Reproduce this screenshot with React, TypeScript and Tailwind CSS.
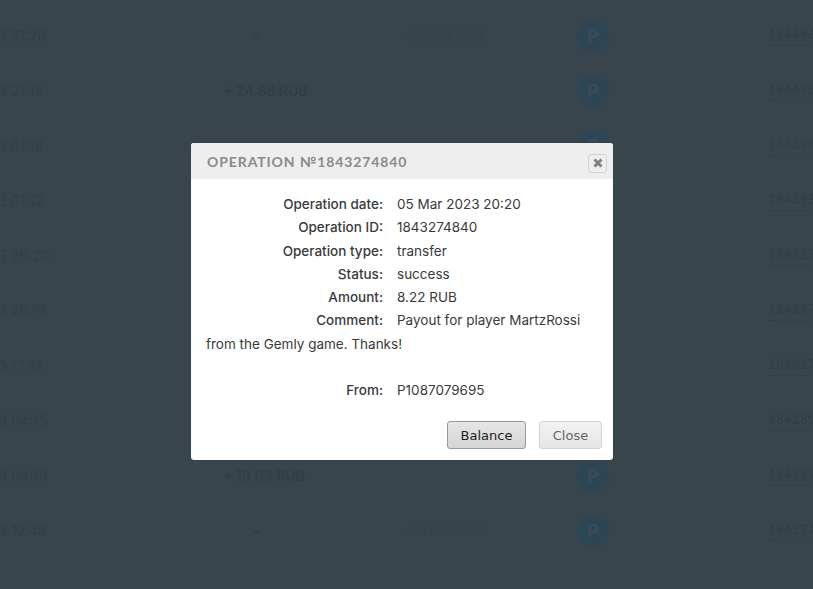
const rows = [
  { date: '05 Mar 2023 21:26', income: '–', expense: '- 24.24 RUB', id: '1844961207' },
  { date: '05 Mar 2023 21:13', income: '+ 24.88 RUB', expense: '', id: '1844955310' },
  { date: '05 Mar 2023 01:18', income: '', expense: '', id: '1843961122' },
  { date: '05 Mar 2023 01:12', income: '', expense: '', id: '1843955871' },
  { date: '05 Mar 2023 20:20', income: '', expense: '', id: '1843274840' },
  { date: '05 Mar 2023 20:19', income: '', expense: '', id: '1843270012' },
  { date: '04 Mar 2023 17:13', income: '', expense: '', id: '1843177345' },
  { date: '04 Mar 2023 04:15', income: '', expense: '', id: '1842895123' },
  { date: '04 Mar 2023 04:13', income: '+ 19.03 RUB', expense: '', id: '1842891176' },
  { date: '03 Mar 2023 19:48', income: '–', expense: '- 201.92 RUB', id: '1842715590' },
];

const details = [
  ['Operation date:', '05 Mar 2023 20:20'],
  ['Operation ID:', '1843274840'],
  ['Operation type:', 'transfer'],
  ['Status:', 'success'],
  ['Amount:', '8.22 RUB'],
];

function Row({ row }: { row: (typeof rows)[number] }) {
  return (
    <div className="flex h-[55px] items-center whitespace-nowrap text-[14px] text-[#323f47]">
      <div className="ml-[-79px] w-[122px] shrink-0">{row.date}</div>
      <div className="w-[300px] shrink-0 pl-[180px]">
        <div className="w-[67px] text-center font-semibold text-[#303e46]">{row.income}</div>
      </div>
      <div className="w-[200px] shrink-0 text-center font-semibold text-[#36434b]">{row.expense}</div>
      <div className="ml-[34px] flex h-8 w-8 shrink-0 items-center justify-center rounded-full bg-[#2c4655] text-[18px] font-bold text-[#3a4c58]">
        P
      </div>
      <div className="ml-[159px] border-b border-dotted border-[#2f3c44] font-['Lato',sans-serif] text-[13px] font-semibold tracking-[0.5px]">
        {row.id}
      </div>
    </div>
  );
}

export default function App() {
  return (
    <div className="relative h-[589px] w-[813px] overflow-hidden bg-[#39454d] font-['Inter',sans-serif]">
      <div className="pt-[8px]">
        {rows.map(row => (
          <Row key={row.id} row={row} />
        ))}
      </div>

      <div className="absolute left-[191px] top-[143px] w-[422px] overflow-hidden rounded-[3px] bg-white shadow-[0_0_1px_rgba(0,0,0,0.5)]">
        <div className="flex h-9 items-center justify-between bg-[#eeeeee] pl-[16px] pr-[6px]">
          <span className="font-['Lato',sans-serif] text-[14px] font-bold tracking-[0.9px] text-[#8a8a8a]">
            OPERATION №1843274840
          </span>
          <button className="mt-1 flex h-[19px] w-[19px] items-center justify-center rounded-[3px] border border-[#d3d3d3] bg-[#eeeeee]">
            <svg width="10" height="10" viewBox="0 0 10 10">
              <path d="M1.5 1.5 L8.5 8.5 M8.5 1.5 L1.5 8.5" stroke="#808080" strokeWidth="3" />
            </svg>
          </button>
        </div>

        <div className="px-[15px] pt-[14px] text-[13.5px] leading-[23.3px] text-[#3a3a3a]">
          {details.map(([label, value]) => (
            <div key={label} className="flex">
              <div className="w-[177px] text-right font-medium">{label}</div>
              <div className="ml-[14px]">{value}</div>
            </div>
          ))}
          <div>
            <span className="inline-block w-[177px] text-right font-medium">Comment:</span>
            <span className="ml-[14px]">Payout for player MartzRossi from the Gemly game. Thanks!</span>
          </div>
          <div className="mt-[23px] flex">
            <div className="w-[177px] text-right font-medium">From:</div>
            <div className="ml-[14px]">P1087079695</div>
          </div>
        </div>

        <div className="flex justify-end gap-[13px] pb-[11px] pr-[11px] pt-[19px] font-['DejaVu_Sans',sans-serif] text-[13px]">
          <button className="h-[28px] w-[79px] rounded-[3px] border border-[#999] bg-gradient-to-b from-[#e6e6e6] to-[#d4d4d4] text-[#222]">
            Balance
          </button>
          <button className="h-[28px] w-[63px] rounded-[3px] border border-[#d3d3d3] bg-gradient-to-b from-[#f2f2f2] to-[#e6e6e6] text-[#666]">
            Close
          </button>
        </div>
      </div>
    </div>
  );
}
